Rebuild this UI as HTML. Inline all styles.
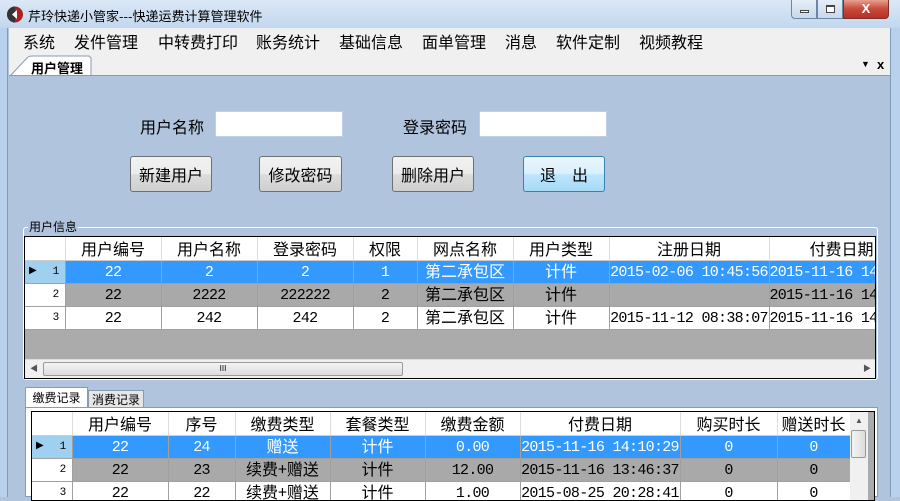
<!DOCTYPE html>
<html><head><meta charset="utf-8"><style>
*{margin:0;padding:0;box-sizing:border-box}
body{width:900px;height:497px;overflow:hidden;position:relative;background:#b0c4de;font-family:"Liberation Sans","Noto Sans CJK SC","WenQuanYi Zen Hei",sans-serif;}
.a{position:absolute}
.t{font-family:"WenQuanYi Zen Hei","Noto Sans CJK SC",sans-serif}
table{border-collapse:collapse;table-layout:fixed;font-family:"Liberation Mono","WenQuanYi Zen Hei",monospace;font-size:15px;letter-spacing:-0.7px}
tr{height:23px}
td{text-align:center;border-right:1px solid #a0a0a0;border-bottom:1px solid #a0a0a0;height:23px;line-height:20px;padding:2px 0 0 0;white-space:nowrap;overflow:hidden;color:#000;vertical-align:top}
td.c{font-family:"WenQuanYi Zen Hei","Noto Sans CJK SC",sans-serif;font-size:16px;line-height:19px;padding-top:0;letter-spacing:0}
tr.h td{background:#fff;font-family:"WenQuanYi Zen Hei","Noto Sans CJK SC",sans-serif;font-size:16px;border-right:1px solid #ddd;border-bottom:1px solid #ccc;line-height:22px;padding-top:0;letter-spacing:0}
tr.s td{background:#3399ff;color:#fff}
tr.g td{background:#a9a9a9}
tr.w td{background:#fff}
td.rh{background:#fff!important;color:#000!important;font-size:11px;text-align:right;padding:0 6px 0 0;border-right:1px solid #a0a0a0;line-height:22px}
tr.s td.rh{background:#9fd0f0!important}
.btn{position:absolute;height:36px;border:1px solid #707070;border-radius:3px;background:linear-gradient(#f2f2f2,#ebebeb 50%,#dddddd 51%,#cfcfcf);font-size:16px;text-align:center;line-height:34px;font-family:"WenQuanYi Zen Hei","Noto Sans CJK SC",sans-serif}
.inp{position:absolute;height:26px;background:#fff;border:1px solid #c0d0e4}
.lbl{position:absolute;font-size:16px;font-family:"WenQuanYi Zen Hei","Noto Sans CJK SC",sans-serif}
</style></head><body>
<div class="a" style="left:0;top:0;width:8px;height:497px;background:#b9d1ec;border-right:1px solid #7f9db9"></div>
<div class="a" style="left:890px;top:0;width:10px;height:497px;background:#b9d1ec;border-left:1px solid #7f9db9"></div>
<div class="a" style="left:0;top:0;width:900px;height:28px;background:linear-gradient(#dbe8f6,#c2d7ee);"></div>
<svg class="a" style="left:6px;top:6px" width="18" height="17"><circle cx="9" cy="8.5" r="8" fill="#b02020"/><path d="M1 8.5 A8 8 0 0 1 9 0.5 L9 16.5 A8 8 0 0 1 1 8.5Z" fill="#333"/><path d="M11 4 L6 8.5 L11 13Z" fill="#fff"/></svg>
<div class="a t" style="left:28px;top:6px;font-size:13px;color:#000">芹玲快递小管家---快递运费计算管理软件</div>
<div class="a" style="left:791px;top:0;width:26px;height:19px;border:1px solid #6d86a6;border-top:0;border-radius:0 0 0 4px;background:linear-gradient(#e6eef8,#c8d8ec)"><div class="a" style="left:8px;top:10px;width:9px;height:3px;border:1px solid #444;background:#fff"></div></div>
<div class="a" style="left:817px;top:0;width:26px;height:19px;border:1px solid #6d86a6;border-top:0;background:linear-gradient(#e6eef8,#c8d8ec)"><div class="a" style="left:8px;top:5px;width:9px;height:8px;border:1px solid #444;border-top-width:2px;background:#fff"></div></div>
<div class="a" style="left:843px;top:0;width:46px;height:19px;border:1px solid #7a3030;border-top:0;border-radius:0 0 4px 0;background:linear-gradient(#e8a090,#c74a3a 50%,#b83020);color:#fff;font-size:13px;font-weight:bold;text-align:center;line-height:17px">X</div>
<div class="a" style="left:9px;top:28px;width:881px;height:48px;background:#f0f0f0"></div>
<div class="a t" style="left:23px;top:29px;font-size:16px;white-space:nowrap">
<span style="position:absolute;left:0">系统</span><span style="position:absolute;left:51px">发件管理</span><span style="position:absolute;left:135px">中转费打印</span><span style="position:absolute;left:233px">账务统计</span><span style="position:absolute;left:316px">基础信息</span><span style="position:absolute;left:399px">面单管理</span><span style="position:absolute;left:482px">消息</span><span style="position:absolute;left:533px">软件定制</span><span style="position:absolute;left:616px">视频教程</span></div>
<svg class="a" style="left:9px;top:54px" width="90" height="23"><path d="M1 22 L18 4 Q20 2 23 2 L80 2 L82 4 L82 22" fill="#fff" stroke="#8a9bb0"/></svg>
<div class="a t" style="left:31px;top:58px;font-size:13px;font-weight:bold">用户管理</div>
<div class="a" style="left:9px;top:75px;width:881px;height:1px;background:#8a9bb0"></div>
<div class="a" style="left:861px;top:59px;font-size:9px">▼</div>
<div class="a" style="left:877px;top:57px;font-size:13px;font-weight:bold">x</div>
<div class="lbl" style="left:140px;top:114px">用户名称</div>
<div class="inp" style="left:215px;top:111px;width:128px"></div>
<div class="lbl" style="left:403px;top:114px">登录密码</div>
<div class="inp" style="left:479px;top:111px;width:128px"></div>
<div class="btn" style="left:130px;top:156px;width:82px">新建用户</div>
<div class="btn" style="left:259px;top:156px;width:83px">修改密码</div>
<div class="btn" style="left:392px;top:156px;width:82px">删除用户</div>
<div class="btn" style="left:523px;top:156px;width:82px;border-color:#3c7fb1;background:linear-gradient(#eaf6fd,#d9f0fc 50%,#bee6fd 51%,#a7d9f5)">退　出</div>
<div class="a" style="left:23px;top:227px;width:855px;height:153px;border:1px solid #fff;border-radius:3px"></div>
<div class="a t" style="left:28px;top:218px;font-size:12px;background:#b0c4de;padding:0 1px">用户信息</div>
<div class="a" style="left:24px;top:236px;width:852px;height:143px;background:#ababab;border:1px solid #000;overflow:hidden">
<table style="width:890px">
<colgroup><col style="width:40px"><col style="width:96px"><col style="width:96px"><col style="width:96px"><col style="width:64px"><col style="width:96px"><col style="width:96px"><col style="width:160px"><col style="width:146px"></colgroup>
<tr class="h"><td class="rh"></td><td>用户编号</td><td>用户名称</td><td>登录密码</td><td>权限</td><td>网点名称</td><td>用户类型</td><td>注册日期</td><td style="text-align:left;padding-left:40px">付费日期</td></tr>
<tr class="s"><td class="rh"><span style="float:left;padding-left:4px;font-size:10px">▶</span>1</td><td>22</td><td>2</td><td>2</td><td>1</td><td class="c">第二承包区</td><td class="c">计件</td><td>2015-02-06 10:45:56</td><td style="text-align:left">2015-11-16 14:10</td></tr>
<tr class="g"><td class="rh">2</td><td>22</td><td>2222</td><td>222222</td><td>2</td><td class="c">第二承包区</td><td class="c">计件</td><td></td><td style="text-align:left">2015-11-16 14:10</td></tr>
<tr class="w"><td class="rh">3</td><td>22</td><td>242</td><td>242</td><td>2</td><td class="c">第二承包区</td><td class="c">计件</td><td>2015-11-12 08:38:07</td><td style="text-align:left">2015-11-16 14:10</td></tr>
</table>
<div class="a" style="left:0;top:122px;width:850px;height:19px;background:#f0f0f0;border-top:1px solid #ddd"><div class="a" style="left:18px;top:2px;width:360px;height:14px;border:1px solid #999;border-radius:2px;background:linear-gradient(#f4f4f4,#dcdcdc);text-align:center;font-size:8px;line-height:12px">III</div><div class="a" style="left:5px;top:3px;font-size:8px;color:#555">◀</div><div class="a" style="left:838px;top:3px;font-size:8px;color:#555">▶</div></div>
</div>
<div class="a t" style="left:25px;top:387px;width:63px;height:21px;background:#fff;border:1px solid #8a9bb0;border-bottom:0;font-size:12px;text-align:center;line-height:20px">缴费记录</div>
<div class="a t" style="left:88px;top:390px;width:56px;height:18px;background:#e6e6e6;border:1px solid #8a9bb0;border-bottom:0;font-size:12px;text-align:center;line-height:18px">消费记录</div>
<div class="a" style="left:25px;top:407px;width:853px;height:90px;background:#fff;border:1px solid #8a9bb0"></div>
<div class="a" style="left:31px;top:411px;width:844px;height:90px;background:#ababab;border:1px solid #000;overflow:hidden">
<table style="width:818px">
<colgroup><col style="width:40px"><col style="width:96px"><col style="width:67px"><col style="width:95px"><col style="width:95px"><col style="width:95px"><col style="width:160px"><col style="width:97px"><col style="width:73px"></colgroup>
<tr class="h"><td class="rh"></td><td>用户编号</td><td>序号</td><td>缴费类型</td><td>套餐类型</td><td>缴费金额</td><td>付费日期</td><td>购买时长</td><td>赠送时长</td></tr>
<tr class="s"><td class="rh"><span style="float:left;padding-left:4px;font-size:10px">▶</span>1</td><td>22</td><td>24</td><td class="c">赠送</td><td class="c">计件</td><td>0.00</td><td>2015-11-16 14:10:29</td><td>0</td><td>0</td></tr>
<tr class="g"><td class="rh">2</td><td>22</td><td>23</td><td class="c">续费+赠送</td><td class="c">计件</td><td>12.00</td><td>2015-11-16 13:46:37</td><td>0</td><td>0</td></tr>
<tr class="w"><td class="rh">3</td><td>22</td><td>22</td><td class="c">续费+赠送</td><td class="c">计件</td><td>1.00</td><td>2015-08-25 20:28:41</td><td>0</td><td>0</td></tr>
</table>
<div class="a" style="left:818px;top:0;width:18px;height:90px;background:#f0f0f0"><div class="a" style="left:5px;top:4px;font-size:8px;color:#555">▲</div><div class="a" style="left:1px;top:18px;width:15px;height:28px;border:1px solid #999;border-radius:2px;background:linear-gradient(90deg,#f4f4f4,#dcdcdc)"></div></div>
</div>
</body></html>
